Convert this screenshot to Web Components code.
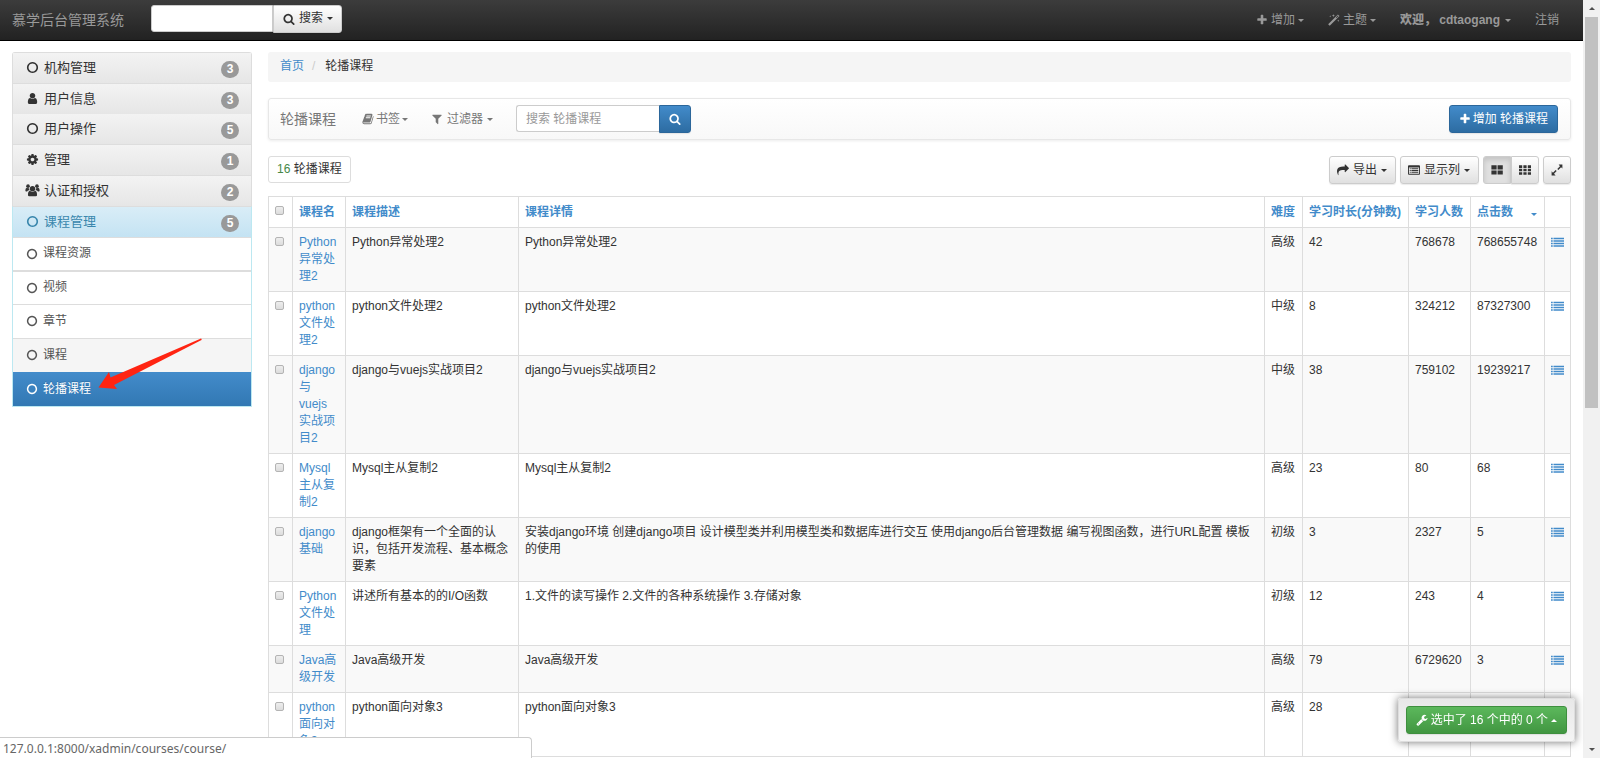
<!DOCTYPE html>
<html lang="zh-CN">
<head>
<meta charset="utf-8">
<title>轮播课程 | 慕学后台管理系统</title>
<style>
  html, body { margin: 0; height: 100%; }
  body { overflow: hidden; background: #fff; color: #333; font: 12px/17px "Liberation Sans", "Noto Sans CJK SC", sans-serif; }
</style>
</head>
<body>
<admin-app></admin-app>
<script>
const BASE = `*{box-sizing:border-box} a{text-decoration:none;color:#428bca} button,input{font:inherit;margin:0}
button{cursor:pointer} ul,ol{list-style:none;margin:0;padding:0}`;

function define(name, css, html) {
  const tpl = document.createElement('template');
  tpl.innerHTML = `<style>${BASE}${css}</style>${html}`;
  customElements.define(name, class extends HTMLElement {
    constructor() {
      super();
      this.attachShadow({ mode: 'open' }).append(tpl.content.cloneNode(true));
    }
  });
}

const ICONS = {
  plus: '<path d="M1600 736v192q0 40-28 68t-68 28h-416v416q0 40-28 68t-68 28h-192q-40 0-68-28t-28-68v-416h-416q-40 0-68-28t-28-68v-192q0-40 28-68t68-28h416v-416q0-40 28-68t68-28h192q40 0 68 28t28 68v416h416q40 0 68 28t28 68z"/>',
  search: '<path d="M1216 832q0-185-131.5-316.5t-316.5-131.5-316.5 131.5-131.5 316.5 131.5 316.5 316.5 131.5 316.5-131.5 131.5-316.5zm512 832q0 52-38 90t-90 38q-54 0-90-38l-343-342q-179 124-399 124-143 0-273.5-55.5t-225-150-150-225-55.5-273.5 55.5-273.5 150-225 225-150 273.5-55.5 273.5 55.5 225 150 150 225 55.5 273.5q0 220-124 399l343 343q37 37 37 90z"/>',
  circle: '<path d="M896 352q-148 0-273 73t-198 198-73 273 73 273 198 198 273 73 273-73 198-198 73-273-73-273-198-198-273-73zm768 544q0 209-103 385.5t-279.5 279.5-385.5 103-385.5-103-279.5-279.5-103-385.5 103-385.5 279.5-279.5 385.5-103 385.5 103 279.5 279.5 103 385.5z"/>',
  user: '<path d="M1536 1399q0 109-62.5 187t-150.5 78h-854q-88 0-150.5-78t-62.5-187q0-85 8.5-160.5t31.5-152 58.5-131 94-89 134.5-34.5q131 128 313 128t313-128q76 0 134.5 34.5t94 89 58.5 131 31.5 152 8.5 160.5zm-256-887q0 159-112.5 271.5t-271.5 112.5-271.5-112.5-112.5-271.5 112.5-271.5 271.5-112.5 271.5 112.5 112.5 271.5z"/>',
  cog: '<path d="M1152 896q0-106-75-181t-181-75-181 75-75 181 75 181 181 75 181-75 75-181zm512-109v222q0 12-8 23t-20 13l-185 28q-19 54-39 91 35 50 107 138 10 12 10 25t-9 23q-27 37-99 108t-94 71q-12 0-26-9l-138-108q-44 23-91 38-16 136-29 186-7 28-36 28h-222q-14 0-24.5-8.5t-11.5-21.5l-28-184q-49-16-90-37l-141 107q-10 9-25 9-14 0-25-11-126-114-165-168-7-10-7-23 0-12 8-23 15-21 51-66.5t54-70.5q-27-50-41-99l-183-27q-13-2-21-12.5t-8-23.5v-222q0-12 8-23t19-13l186-28q14-46 39-92-40-57-107-138-10-12-10-24 0-10 9-23 26-36 98.5-107.5t94.5-71.5q13 0 26 10l138 107q44-23 91-38 16-136 29-186 7-28 36-28h222q14 0 24.5 8.5t11.5 21.5l28 184q49 16 90 37l142-107q9-9 24-9 13 0 25 10 129 119 165 170 7 8 7 22 0 12-8 23-15 21-51 66.5t-54 70.5q26 50 41 98l183 28q13 2 21 12.5t8 23.5z"/>',
  users: '<circle cx="896" cy="640" r="370"/><path d="M440 1700q-170 0-170-200 0-480 260-560 150 130 366 130t366-130q260 80 260 560 0 200-170 200z"/><circle cx="280" cy="300" r="250"/><circle cx="1512" cy="300" r="250"/><path d="M440 860q-190 10-290 170h-110q-130 0-130-120 0-340 170-390 190 110 340 40-10 160 60 300zM1352 860q190 10 290 170h110q130 0 130-120 0-340-170-390-190 110-340 40 10 160-60 300z"/>',
  filter: '<path d="M1595 295q17 41-14 70l-493 493v742q0 42-39 59-13 5-25 5-27 0-45-19l-256-256q-19-19-19-45v-486l-493-493q-31-29-14-70 17-39 59-39h1280q42 0 59 39z"/>',
  book: '<path d="M1703 478q40 57 18 129l-275 906q-19 64-76.5 107.5t-122.5 43.5h-923q-77 0-148.5-53.5t-99.5-131.5q-24-67-2-127 0-4 3-27t4-37q1-8-3-21.5t-3-19.5q2-11 8-21t16.5-23.5 16.5-23.5q23-38 45-91.5t30-91.5q3-10 .5-30t-.5-28q3-11 17-28t17-23q21-36 42-92t25-90q1-9-2.5-32t.5-28q4-13 22-30.5t22-22.5q19-26 42.5-84.5t27.5-96.5q1-8-3-25.5t-2-26.5q2-8 9-18t18-23 17-21q8-12 16.5-30.5t15-35 16-36 19.5-32 26.5-23.5 36-11.5 47.5 5.5l-1 3q38-9 51-9h761q74 0 114 56t18 130l-274 906q-36 119-71.5 153.5t-128.5 34.5h-869q-27 0-38 15-11 16-1 43 24 70 144 70h923q29 0 56-15.5t35-41.5l300-987q7-22 5-57 38 15 59 43zm-1064 2q-4 13 2 22.5t20 9.5h608q13 0 25.5-9.5t16.5-22.5l21-64q4-13-2-22.5t-20-9.5h-608q-13 0-25.5 9.5t-16.5 22.5zm-83 256q-4 13 2 22.5t20 9.5h608q13 0 25.5-9.5t16.5-22.5l21-64q4-13-2-22.5t-20-9.5h-608q-13 0-25.5 9.5t-16.5 22.5z"/>',
  wrench: '<path d="M448 1472q0-26-19-45t-45-19-45 19-19 45 19 45 45 19 45-19 19-45zm644-420l-682 682q-37 37-90 37-52 0-91-37l-106-108q-38-36-38-90 0-53 38-91l681-681q39 98 114.5 173.5t173.5 114.5zm634-435q0 39-23 106-47 134-164.5 217.5t-258.5 83.5q-185 0-316.5-131.5t-131.5-316.5 131.5-316.5 316.5-131.5q58 0 121.5 16.5t107.5 46.5q16 11 16 28t-16 28l-293 169v224l193 107q5-3 79-48.5t135.5-81 70.5-35.5q15 0 23.5 10t8.5 25z"/>',
  share: '<path d="M1792 640q0 26-19 45l-512 512q-19 19-45 19t-45-19-19-45v-256h-224q-98 0-175.5 6t-154 21.5-133 42.5-105.5 69.5-80 101-48.5 138.5-17.5 181q0 55 5 123 0 6 2.5 23.5t2.5 26.5q0 15-8.5 25t-23.5 10q-16 0-28-17-7-9-13-22t-13.5-30-10.5-24q-127-285-127-451 0-199 53-333 162-403 875-403h224v-256q0-26 19-45t45-19 45 19l512 512q19 19 19 45z"/>',
  magic: '<path fill-rule="evenodd" d="M1480 60l240 240L260 1760 20 1520zM1480 210l-300 300 90 90 300-300z"/><path d="M330 180l35 115 115 35-115 35-35 115-35-115-115-35 115-35zM800 0l60 190 190 60-190 60-60 190-60-190-190-60 190-60zM1530 820l45 135 135 45-135 45-45 135-45-135-135-45 135-45z"/>',
  large: '<path d="M60 200h780v620H60zM980 200h780v620H980zM60 960h780v620H60zM980 960h780v620H980z"/>',
  grid: '<path d="M0 200h480v380H0zM656 200h480v380H656zM1312 200h480v380h-480zM0 710h480v380H0zM656 710h480v380H656zM1312 710h480v380h-480zM0 1220h480v380H0zM656 1220h480v380H656zM1312 1220h480v380h-480z"/>',
  list: '<path d="M0 240h240v200H0zM340 240h1452v200H340zM0 590h240v200H0zM340 590h1452v200H340zM0 940h240v200H0zM340 940h1452v200H340zM0 1290h240v200H0zM340 1290h1452v200H340z"/>',
  table: '<path fill-rule="evenodd" d="M140 200h1512q140 0 140 140v1116q0 140-140 140H140q-140 0-140-140V340q0-140 140-140zM140 520v930h1512V520z"/><path d="M260 640h150v130H260zM510 640h1022v130H510zM260 900h150v130H260zM510 900h1022v130H510zM260 1160h150v130H260zM510 1160h1022v130H510z"/>',
  expand: '<path d="M1700 90v600l-200-200-400 400-160-160 400-400-200-240zM90 1700v-600l200 200 400-400 160 160-400 400 240 240z"/>'
};

customElements.define('fa-icon', class extends HTMLElement {
  connectedCallback() {
    if (this.shadowRoot) return;
    this.attachShadow({ mode: 'open' }).innerHTML =
      `<style>:host{display:inline-block;flex:none;width:var(--icon,12px);height:var(--icon,12px)}svg{display:block;width:100%;height:100%;overflow:visible;fill:currentColor}</style>
       <svg viewBox="0 0 1792 1792" aria-hidden="true">${ICONS[this.getAttribute('name')]}</svg>`;
  }
});

define('drop-caret',
  `:host{display:inline-block;flex:none;border:3px solid transparent;border-top-color:currentColor;border-bottom:0}
   :host([up]){border-top:0;border-bottom:3px solid currentColor}`, '');

define('tool-button',
  `:host{display:inline-flex}
   button{display:flex;align-items:center;gap:4px;width:100%;height:28px;padding:0 8px 0 7px;border:1px solid #ccc;border-radius:3px;color:#333;white-space:nowrap;
     background:linear-gradient(#fff,#e0e0e0);box-shadow:0 1px 1px rgba(0,0,0,.08)}
   :host([kind=icon]) button{padding:0 7px}
   :host([kind=search]) button{padding:0 8px 1px 9px}
   :host([kind=primary]) button{background:linear-gradient(#428bca,#2d6ca2);border-color:#2b669a;color:#fff;padding:0 9px;gap:2px}
   :host([kind=success]) button{background:linear-gradient(#5cb85c,#419641);border-color:#3e8f3e;color:#fff;padding:0 9px;gap:3px}
   :host([pressed]) button{background:#e0e0e0;box-shadow:inset 0 3px 5px rgba(0,0,0,.125);border-color:#ccc}
   :host([join=left]) button{border-radius:0 3px 3px 0}
   :host([join=right]) button{border-radius:3px 0 0 3px}`,
  '<button type="button"><slot></slot></button>');

define('top-bar',
  `:host{display:block;background:linear-gradient(#3c3c3c,#222);border-bottom:1px solid #000;color:#999}
   nav{display:flex;height:40px;padding:0 24px 0 12px}
   .brand{font-size:14px;color:#999;align-self:center;width:139px}
   form{display:flex;margin:5px auto 0 0}
   input{width:122px;height:27px;padding:0 8px;border:1px solid #ccc;border-radius:3px 0 0 3px;background:#fff}
   ul{display:flex;align-items:center;gap:24px}
   li a{display:flex;align-items:center;gap:3px;color:#999}
   li:nth-child(3){font-weight:bold} b{margin-right:2px}`,
  `<nav><a class="brand" href="#">慕学后台管理系统</a>
   <form><input type="text" aria-label="搜索"><tool-button kind="search" join="left"><fa-icon name="search"></fa-icon><span>搜索</span><drop-caret></drop-caret></tool-button></form>
   <ul><li><a href="#"><fa-icon name="plus"></fa-icon>增加<drop-caret></drop-caret></a></li>
   <li><a href="#"><fa-icon name="magic"></fa-icon>主题<drop-caret></drop-caret></a></li>
   <li><a href="#"><b>欢迎， cdtaogang</b><drop-caret></drop-caret></a></li>
   <li><a href="#">注销</a></li></ul></nav>`);

customElements.define('menu-group', class extends HTMLElement {
  connectedCallback() {
    if (this.shadowRoot) return;
    this.attachShadow({ mode: 'open' }).innerHTML = `<style>${BASE}
      :host{display:block;border:1px solid #ddd;border-bottom:0}
      :host(:first-child){border-radius:3px 3px 0 0}
      :host([seamless]){border-top:0}
      a{display:flex;align-items:center;height:30px;padding:0 12px 2px 13px;gap:5px;font-size:13px;color:#333;--icon:13px;background:linear-gradient(#f3f3f3,#e6e6e6)}
      .badge{margin:4px 0 0 auto;width:18px;height:17px;border-radius:9px;background:#999;color:#fff;font-weight:bold;font-size:12px;line-height:17px;text-align:center}
      :host([open]){border-color:#ddd #bce8f1 #bce8f1;border-bottom:1px solid #bce8f1}
      :host([open]) a{color:#3a87ad;background:linear-gradient(#d9edf7,#c4e3f3)}
      </style><a href="#"><fa-icon name="${this.getAttribute('icon')}"></fa-icon><span>${this.getAttribute('label')}</span><span class="badge">${this.getAttribute('count')}</span></a><slot></slot>`;
  }
});

define('menu-entry',
  `:host{display:block;border-top:1px solid #ddd}
   a{display:flex;align-items:center;gap:5px;height:33px;padding:0 13px 1px;color:#555}
   :host([short]) a{height:32px}
   :host([shaded]) a{background:#f5f5f5}
   :host([doubled]){border-top-width:2px}
   :host([active]){border-color:#428bca}
   :host([active]) a{color:#fff;background:linear-gradient(#428bca,#3278b3);text-shadow:0 -1px 0 #3071a9}`,
  '<a href="#"><fa-icon name="circle"></fa-icon><slot></slot></a>');

define('side-menu', `:host{display:block}`,
  `<nav><menu-group icon="circle" label="机构管理" count="3"></menu-group>
   <menu-group icon="user" label="用户信息" count="3"></menu-group>
   <menu-group seamless icon="circle" label="用户操作" count="5"></menu-group>
   <menu-group icon="cog" label="管理" count="1"></menu-group>
   <menu-group icon="users" label="认证和授权" count="2"></menu-group>
   <menu-group open icon="circle" label="课程管理" count="5">
     <menu-entry short>课程资源</menu-entry><menu-entry short doubled>视频</menu-entry><menu-entry>章节</menu-entry>
     <menu-entry shaded>课程</menu-entry><menu-entry active>轮播课程</menu-entry>
   </menu-group></nav>`);

define('crumb-trail',
  `:host{display:block;background:#f5f5f5;border-radius:3px}
   ol{display:flex;height:30px;padding:6px 12px} li+li::before{content:"/";color:#ccc;padding:0 10px 0 8px}`,
  `<nav><ol><li><a href="#">首页</a></li><li>轮播课程</li></ol></nav>`);

define('list-toolbar',
  `:host{display:flex;align-items:center;height:42px;padding:0 12px 0 11px;border:1px solid #e7e7e7;border-radius:3px;background:linear-gradient(#fff,#f8f8f8);box-shadow:0 1px 3px rgba(0,0,0,.08)}
   h1{margin:0 26px 0 0;font-weight:normal;font-size:14px;color:#777}
   .menu{display:flex;align-items:center;gap:2px;color:#777;margin-right:23px}
   .menu.spaced{gap:4px}
   form{display:flex;margin-right:auto}
   input{width:143px;height:27px;padding:0 9px;border:1px solid #ccc;border-right:0;border-radius:3px 0 0 3px;background:#fff}
   input::placeholder{color:#999;opacity:1}`,
  `<h1>轮播课程</h1>
   <a class="menu" href="#"><fa-icon name="book"></fa-icon>书签<drop-caret></drop-caret></a>
   <a class="menu spaced" href="#"><fa-icon name="filter"></fa-icon>过滤器 <drop-caret></drop-caret></a>
   <form><input type="text" placeholder="搜索 轮播课程" aria-label="搜索 轮播课程"><tool-button kind="primary" join="left"><fa-icon name="search"></fa-icon></tool-button></form>
   <tool-button kind="primary"><fa-icon name="plus"></fa-icon><span>增加 轮播课程</span></tool-button>`);

define('list-actions',
  `:host{display:flex;gap:4px}
   .count{height:27px;padding:4px 8px;border:1px solid #ddd;border-radius:3px;margin-right:auto}
   .count b{font-weight:normal;color:#468847} .pair{display:flex}`,
  `<div class="count"><b>16</b> 轮播课程</div>
   <tool-button><fa-icon name="share"></fa-icon><span>导出</span><drop-caret></drop-caret></tool-button>
   <tool-button><fa-icon name="table"></fa-icon><span>显示列</span><drop-caret></drop-caret></tool-button>
   <div class="pair"><tool-button kind="icon" pressed join="right"><fa-icon name="large"></fa-icon></tool-button><tool-button kind="icon" join="left"><fa-icon name="grid"></fa-icon></tool-button></div>
   <tool-button kind="icon"><fa-icon name="expand"></fa-icon></tool-button>`);

const ROWS = [
  ['Python异常处理2', 'Python异常处理2', 'Python异常处理2', '高级', '42', '768678', '768655748'],
  ['python文件处理2', 'python文件处理2', 'python文件处理2', '中级', '8', '324212', '87327300'],
  ['django与vuejs实战项目2', 'django与vuejs实战项目2', 'django与vuejs实战项目2', '中级', '38', '759102', '19239217'],
  ['Mysql主从复制2', 'Mysql主从复制2', 'Mysql主从复制2', '高级', '23', '80', '68'],
  ['django基础', 'django框架有一个全面的认识，包括开发流程、基本概念要素', '安装django环境 创建django项目 设计模型类并利用模型类和数据库进行交互 使用django后台管理数据 编写视图函数，进行URL配置 模板的使用', '初级', '3', '2327', '5'],
  ['Python文件处理', '讲述所有基本的的I/O函数', '1.文件的读写操作 2.文件的各种系统操作 3.存储对象', '初级', '12', '243', '4'],
  ['Java高级开发', 'Java高级开发', 'Java高级开发', '高级', '79', '6729620', '3'],
  ['python面向对象3', 'python面向对象3', 'python面向对象3', '高级', '28', '', '']
];
const HEADS = ['课程名', '课程描述', '课程详情', '难度', '学习时长(分钟数)', '学习人数'];
const WIDTHS = [24, 53, 173, 0, 38, 106, 62, 74, 26];

define('course-table',
  `:host{display:block}
   table{width:100%;table-layout:fixed;border-collapse:collapse}
   th,td{border:1px solid #ddd;padding:6px 0 6px 6px;text-align:left;vertical-align:top;overflow-wrap:break-word}
   th{padding-top:7px;white-space:nowrap}
   td:nth-child(n+2):nth-child(-n+4){padding-right:8px}
   tbody tr:nth-child(odd){background:#f9f9f9}
   .sort{display:flex;align-items:center;justify-content:space-between;padding-right:7px}
   .sort drop-caret{margin-top:4px}
   input{appearance:none;display:block;width:9px;height:9px;margin-top:3px;border:1px solid #b4b4b4;border-radius:2px;background:linear-gradient(#eee,#dcdcdc)}
   th input{margin-top:2px}
   fa-icon{--icon:13px;display:block;margin-top:2px}`,
  `<table><colgroup>${WIDTHS.map(w => w ? `<col style="width:${w}px">` : '<col>').join('')}</colgroup>
   <thead><tr><th><input type="checkbox" aria-label="全选"></th>${HEADS.map(h => `<th><a href="#">${h}</a></th>`).join('')}<th><a class="sort" href="#">点击数<drop-caret></drop-caret></a></th><th></th></tr></thead>
   <tbody>${ROWS.map(r => `<tr><td><input type="checkbox" aria-label="${r[0]}"></td><td><a href="#">${r[0]}</a></td>${r.slice(1).map(c => `<td>${c}</td>`).join('')}<td><a href="#" aria-label="详情"><fa-icon name="list"></fa-icon></a></td></tr>`).join('')}</tbody></table>`);

define('selection-box',
  `:host{position:fixed;right:25px;bottom:16px;padding:7px;background:linear-gradient(#e8e8e8,#f5f5f5);border:1px solid #ddd;border-radius:3px;box-shadow:0 0 8px rgba(0,0,0,.55)}
   tool-button{display:flex}`,
  `<tool-button kind="success"><fa-icon name="wrench"></fa-icon><span>选中了 16 个中的 0 个</span><drop-caret up></drop-caret></tool-button>`);

define('link-status',
  `:host{position:fixed;left:0;bottom:0;width:532px;max-width:50%;height:21px;padding:2px 3px;background:#fff;border:1px solid #ccc;border-width:1px 1px 0 0;border-radius:0 4px 0 0;color:#666;font-family:"Noto Sans",sans-serif}`,
  `127.0.0.1:8000/xadmin/courses/course/`);

define('scroll-rail',
  `:host{display:flex;flex-direction:column;background:#f1f1f1}
   .end{height:17px;display:flex;align-items:center;justify-content:center;color:#505050}
   .end:first-child{color:#a3a3a3}
   .track{flex:1;padding:0 2px} .thumb{height:54%;background:#c1c1c1}`,
  `<div class="end"><drop-caret up></drop-caret></div><div class="track"><div class="thumb"></div></div><div class="end"><drop-caret></drop-caret></div>`);

define('pointer-arrow',
  `:host{position:absolute;left:98px;top:337px;pointer-events:none} svg{display:block}`,
  `<svg width="106" height="54" viewBox="0 0 106 54" aria-hidden="true"><path fill="#ff2412" d="M0.5 50.5L11 35l1.5 5.5L103 1.5q1 0 .5 1.5L16 48l3 4z"/></svg>`);

define('admin-app',
  `:host{display:grid;grid-template-columns:minmax(0,1fr) 17px;height:100vh;position:relative}
   .page{overflow:hidden}
   .body{display:grid;grid-template-columns:240px minmax(0,1fr);gap:16px;padding:11px 12px 0;align-items:start}
   main{display:flex;flex-direction:column} list-toolbar{margin:16px 0} list-actions{margin-bottom:12px}`,
  `<div class="page"><top-bar></top-bar><div class="body"><side-menu></side-menu>
   <main><crumb-trail></crumb-trail><list-toolbar></list-toolbar><list-actions></list-actions><course-table></course-table></main></div></div>
   <scroll-rail></scroll-rail><selection-box></selection-box><link-status></link-status><pointer-arrow></pointer-arrow>`);
</script>
</body>
</html>
